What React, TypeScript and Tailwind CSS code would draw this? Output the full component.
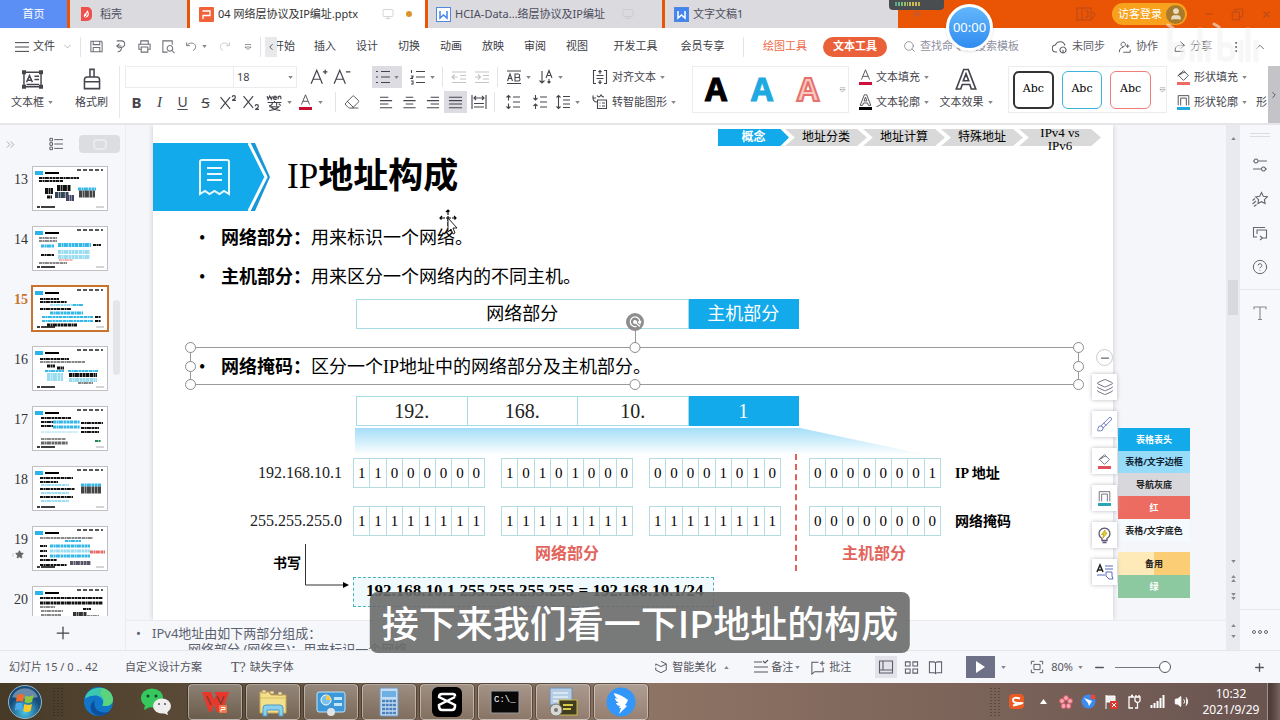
import React from "react";
import {
  Plus,
  Minus,
  Layers,
  Search,
  Star,
  HelpCircle,
  ChevronsRight,
  ChevronDown,
  ChevronUp,
  ChevronLeft,
  ChevronRight,
  MoreVertical,
  Volume2,
  Eraser,
  Brush,
  User,
  Monitor,
} from "lucide-react";

const UI_FONT = "font-['Noto_Sans','Noto_Sans_CJK_SC',sans-serif]";
const SLIDE_FONT = "font-['Liberation_Serif','Noto_Sans_CJK_SC',serif]";

/* ---------- small helpers ---------- */

interface IcoProps {
  d: string;
  size?: number;
  className?: string;
  fill?: string;
}

const Ico: React.FC<IcoProps> = ({ d, size = 16, className = "", fill = "none" }) => (
  <svg
    width={size}
    height={size}
    viewBox="0 0 16 16"
    fill={fill}
    stroke="currentColor"
    strokeWidth="1.1"
    className={`shrink-0 ${className}`}
  >
    <path d={d} />
  </svg>
);

const Caret: React.FC<{ up?: boolean }> = ({ up }) => (
  <svg width="5" height="3" viewBox="0 0 6 4" className="shrink-0 text-[#85858c]">
    <path d={up ? "M0 4h6L3 0z" : "M0 0h6L3 4z"} fill="currentColor" />
  </svg>
);

const icons = {
  save: "M2 2.500h11l1 1v10H2zM4.500 2.500v3.500h7v-3.500M4.500 13.500V9h7v4.500",
  pdf: "M4 2h5a3.500 3.500 0 0 1 0 7H7M7 5L4 7.500 7 10M4 7.500h5M9 9c0 3-1.500 4.500-4 4.500",
  print: "M4 5V2h8v3M4 11H2V5.500h12V11h-2M4.500 8.500h7V14h-7z",
  preview: "M7 14H2V2h10v4M9.500 7a3 3 0 1 0 .01 0zM11.500 12l3 3",
  undo: "M2 3v4h4M2.500 6.500C5 3.500 9 3 11.500 5s2 6-1.500 8",
  redo: "M14 3v4h-4M13.500 6.500C11 3.500 7 3 4.500 5s-2 6 1.500 8",
  more: "M3 4h10M3 8h10l-5 4z",
  textbox: "M1.500 2.500h13v11h-13zM.5 1.500h2v2h-2zM13.500 1.500h2v2h-2zM.5 12.500h2v2h-2zM13.500 12.500h2v2h-2zM3.500 10L5.700 5l2.200 5M4.300 8.500h2.800M9.500 5.500h3.500M9.500 8h3.500M3.500 11.800H13",
  brush: "M6.500 1h3v5.500h-3zM2.500 10V8.500q0-2 2-2h7q2 0 2 2V10zM2.500 10h11v5h-11z",
  bullets: "M1 2.500h2M1 8h2M1 13.500h2M6 2.500h9M6 8h9M6 13.500h9",
  numbers: "M1.500 1v3M1 7h2v1l-2 1.500h2M1 12h2v3H1M6 2.500h9M6 8h9M6 13.500h9",
  outdent: "M1 3h14M9 6.500h6M9 10h6M1 13.500h14M6.500 8H1M3.500 5.500L1 8l2.500 2.500",
  indent: "M1 3h14M9 6.500h6M9 10h6M1 13.500h14M1 8h5.500M4 5.500L6.500 8 4 10.500",
  charWidth: "M1 2h14M1 14.500h14M1.500 12L4 5l2.500 7M2.500 9.500h3M9 5v7h3.500q1.500 0 1.500-1.800t-2-1.700q1.700 0 1.700-1.700T12.200 5zM9 8.500h3",
  sort: "M4 2v12M1.500 11.500L4 14l2.500-2.500M8 9l3-7.500L14 9M9 6.500h4M11 10v4M9.500 12.500L11 14l1.500-1.500",
  left: "M1 2.500h9M1 6h13M1 9.500h9M1 13.500h13",
  center: "M4 2.500h8M1.500 6h13M4 9.500h8M1.500 13.500h13",
  right: "M6 2.500h9M2 6h13M6 9.500h9M2 13.500h13",
  justify: "M1 2.500h14M1 6h14M1 9.500h14M1 13.500h14",
  distribute: "M1 1v14M15 1v14M3 4h10M5 2L3 4l2 2M11 2l2 2-2 2M3 9.500h10M3 13h10",
  spacing: "M3.500 1.500v5M1.500 3.500l2-2 2 2M3.500 9.500v5M1.500 12.500l2 2 2-2M8 3h7M8 8h7M8 13h7",
  spacingIn: "M3.500 1v5M1.500 4l2 2 2-2M3.500 10v5M1.500 12l2-2 2 2M8 3h7M8 8h7M8 13h7",
  lineheight: "M3.500 1.500v13M1.500 3.500l2-2 2 2M1.500 12.500l2 2 2-2M8 2.500h7M8 6h7M8 10h7M8 13.500h7",
  alignText: "M4 1.500H1.500v13H4M12 1.500h2.500v13H12M4.500 6.500h7M4.500 9.500h7M8 5V1.500M6.500 3L8 1.500 9.500 3M8 11v3.500M6.500 13L8 14.500 9.500 13",
  smart: "M5 8C2 8 1 6 1 3.500M1 1.500l0 2.500h3M5 1.500q2 3 4-.5 1 2 3 2M5.500 6h9v8.500h-9zM7.500 9h1M10 9h3M7.500 12h1M10 12h3",
  letterA: "M3 13L8 1l5 12M5 9h6",
  letterAOutline: "M1.500 14L6.500 1h3l5 13h-3l-1-3h-5l-1 3zM6.200 8.500h3.600L8 3.800z",
  phonetic: "M1 2l1 3 1.500-3L5 5l1-3M7 3.500h3q-.5-1.500-1.500-1.500T7 3.500 8.500 5H10M11.500 5V2M11.500 3q2-2 2.500 0v2M8 6.500v1.500M1.500 8h13M6 8q0 3-3 3M10 8v3M12 9l2 2M3 12h9q-3 3-9 3.500M4.500 12q3 3 9 3.500",
  cloud: "M5 13H4a3.500 3.500 0 0 1-.5-7A5 5 0 0 1 13 6.500M11 8a3 3 0 1 0 .01 0M11 11v3",
  people: "M6 2.500a2.500 2.500 0 1 0 .01 0M1.500 14c0-4 2-5.500 4.500-5.500M11 5v4M9 7h4M6 14h8M14 11v3",
  share: "M9 2l5 4.500-5 4M14 6.500H9c-5 0-6.500 3-6.500 7.500H13",
  bucket: "M8 2l6 6-6 6-6-6zM4 7.500c2-3 5-4 6.500-3M1 9q2-4 5-4.500",
  outline: "M1.500 14V2h13v12M4.500 14V5h7v9",
  cube: "M8 1.500l6 3v7l-6 3-6-3v-3M2 4.500l6 3 6-3M2 4.500v2",
  notes: "M1 3h8M1 8h14M1 13h14M10 2l2 2 3-3",
  comment: "M9 2.500H2V15l3-2.500h9V8M13 1v5M10.500 3.500h5",
  normal: "M1.500 2h13v12h-13zM5 2v9M1.500 11h13",
  grid: "M1.500 2h5v4.500h-5zM9.500 2h5v4.500h-5zM1.500 9.500h5V14h-5zM9.500 9.500h5V14h-5z",
  book: "M8 3v11.500M8 3L6.500 2h-5v11.500h5L8 14.500l1.500-1h5V2h-5z",
  fit: "M1.500 5V1.500H5M11 1.500h3.500V5M14.500 11v3.500H11M5 14.500H1.500V11M4.500 5h7v6h-7z",
  sliders: "M1 4h1M6 4h9M4 2a2 2 0 1 0 .01 0M1 12h8M13.500 12H15M11.500 10a2 2 0 1 0 .01 0",
  starMotion: "M9.500 1.500l1.800 3.700 4 .6-2.900 2.800.7 4-3.600-1.900-3.600 1.900.7-4L3.700 5.800l4-.6zM.5 9.500L3 7.500M.5 13L4 10M2 15.500l2.500-2",
  windows: "M5 12H1.500V2.500H13M4.500 5h10v8h-4M5 9V5M8 11l2.500 2L8 15",
  outlineList: "M1 1.500h3v3H1zM1 6.500h3v3H1zM1 11.500h3v3H1zM6 3h10M6 8h10M6 13h10",
  gallery: "M2 4h12M2 8h12l-6 6z",
};

/* ---------- title tabs ---------- */

const PptBadge = () => (
  <svg width="15" height="15" viewBox="0 0 15 15" className="shrink-0">
    <rect width="15" height="15" rx="1" fill="#f0623a" />
    <path d="M3.500 4h7.500v4.500H4v3.500" fill="none" stroke="#fff" strokeWidth="1.300" />
  </svg>
);

const WordBadge: React.FC<{ solid?: boolean }> = ({ solid }) => (
  <svg width="15" height="15" viewBox="0 0 15 15" className="shrink-0">
    <rect x=".5" y=".5" width="14" height="14" fill={solid ? "#4285f0" : "#fff"} stroke="#4f88dc" />
    <path d="M4 4v7l3.500-3 3.500 3V4" fill="none" stroke={solid ? "#fff" : "#4285f0"} strokeWidth="1.500" />
  </svg>
);

const TitleBar = () => (
  <header className="relative flex h-7 shrink-0 gap-[3px] bg-[#e95504] text-[11px] text-[#4c4c5c]">
    <button className="w-[67px] bg-[#5c8ff5] text-white">首页</button>
    <button className="flex w-[117px] items-center gap-2 bg-[#dadadf] pl-[11px]">
      <svg width="11" height="14" viewBox="0 0 11 14">
        <path d="M0 0h7q4 1 4 5.500V9q0 5-6 5H0z" fill="#f0504c" />
        <path d="M3 10c-1-4 3-3 3-7 4 4 1 9-3 7z" fill="#fff" />
        <path d="M4 10q2-1 2.500-4" stroke="#f0504c" fill="none" />
      </svg>
      稻壳
    </button>
    <button className="flex w-[235px] items-center bg-white pl-[9px] text-[#333]">
      <PptBadge />
      <span className="ml-1 flex-1 whitespace-nowrap text-left">04 网络层协议及IP编址.pptx</span>
      <Monitor size={12} className="text-[#c8c8cc]" strokeWidth={1.5} />
      <span className="ml-3 mr-[13px] size-[6px] rounded-full bg-[#dc9428]" />
    </button>
    <button className="flex w-[234px] items-center bg-[#dadadf] pl-[8px]">
      <WordBadge />
      <span className="ml-1 flex-1 whitespace-nowrap text-left">HCIA-Data...络层协议及IP编址</span>
      <Monitor size={12} className="mr-7 text-[#c8c8cc]" strokeWidth={1.5} />
    </button>
    <button className="flex w-[233px] items-center gap-1 bg-[#dadadf] pl-[9px]">
      <WordBadge solid />
      文字文稿1
    </button>
    <button aria-label="新建标签" className="w-8 text-[#a9614c]">
      <Plus size={12} className="mx-auto" />
    </button>

    <div className="ml-auto flex items-center text-[#b8491a]">
      <svg width="20" height="14" viewBox="0 0 20 14" fill="none" stroke="currentColor">
        <rect x="1" y="1" width="14" height="12" />
        <path d="M6 1v12M9 4h3v6H9M16 5l3 2-3 5" />
      </svg>
      <button className="ml-4 flex h-[22px] w-[75px] items-center justify-between rounded-full bg-[#f7a11c] pl-[6px] pr-[2px] text-white">
        访客登录
        <span className="flex size-[19px] items-center justify-center rounded-full bg-[#a87a2c]">
          <User size={14} fill="#e8dcc0" stroke="#e8dcc0" />
        </span>
      </button>
      <button aria-label="最小化" className="ml-4">
        <Minus size={12} />
      </button>
      <button aria-label="还原" className="ml-4">
        <Ico size={13} d="M1.500 5h9v9.500h-9zM5 5V1.500h9.500V11h-4" />
      </button>
      <button aria-label="关闭" className="ml-4 mr-[7px]">
        <Plus size={13} className="rotate-45" />
      </button>
    </div>

    {/* recorder level meter, docked to the top edge */}
    <div className="absolute left-[889px] top-0 h-[10px] w-[55px] rounded-b bg-[#4a4d50] px-[6px] pt-[2px]">
      <div className="flex h-1 w-[25px] gap-px">
        {["#5a9", "#6b8", "#7b7", "#9b6", "#ab6", "#bb5", "#cb5", "#cb5", "#ca5"].map((c, i) => (
          <span key={i} className="flex-1" style={{ background: c }} />
        ))}
      </div>
    </div>
    <div className="absolute left-[946px] top-1 z-10 flex size-[47px] items-center justify-center rounded-full border-[3px] border-white bg-gradient-to-b from-[#62b6fa] to-[#2f8cf0] text-[13px] text-white shadow">
      00:00
    </div>
  </header>
);

/* ---------- menu ---------- */

const VSep = () => <span className="h-5 w-px shrink-0 bg-[#e4e4e8]" />;

const menuTabs = ["插入", "设计", "切换", "动画", "放映", "审阅", "视图"];

const MenuBar = () => (
  <nav className="relative flex h-[37px] shrink-0 items-center bg-white text-[11px] text-[#3c3c44]">
    <button className="flex w-20 items-center pl-[15px]">
      <Ico size={14} d="M0 3h16M0 8h16M0 13h16" />
      <span className="ml-1">文件</span>
      <ChevronDown size={11} className="ml-[7px] text-[#999]" strokeWidth={1.5} />
    </button>
    <VSep />
    <div className="flex w-[179px] items-center pl-1 text-[#6c6c74]">
      {["save", "pdf", "print", "preview"].map((n) => (
        <button key={n} aria-label={n} className="flex w-6 justify-center">
          <Ico size={15} d={icons[n as keyof typeof icons]} />
        </button>
      ))}
      <button aria-label="撤销" className="flex w-8 items-center justify-center gap-1">
        <Ico size={13} d={icons.undo} />
        <Caret />
      </button>
      <button aria-label="重做" className="flex w-6 justify-center text-[#c4c4c8]">
        <Ico size={13} d={icons.redo} />
      </button>
      <button aria-label="更多" className="flex w-6 justify-center">
        <Ico size={10} d={icons.more} />
      </button>
    </div>
    <VSep />
    <button aria-label="向左" className="ml-1 flex h-5 w-3 items-center justify-center bg-[#e9e9ec]">
      <ChevronLeft size={10} />
    </button>
    <button className="flex w-[18px] justify-end overflow-hidden whitespace-nowrap">开始</button>
    <div className="ml-[9px] flex">
      {menuTabs.map((t) => (
        <button key={t} className="w-[42px]">
          {t}
        </button>
      ))}
    </div>
    <button className="ml-1 w-[67px]">开发工具</button>
    <button className="w-[67px]">会员专享</button>
    <span className="ml-[7px] flex">
      <VSep />
    </span>
    <button className="ml-[11px] w-[60px] text-[#ee6a45]">绘图工具</button>
    <button className="ml-2 h-5 w-16 rounded-full bg-[#ea6038] font-bold text-white">文本工具</button>
    <label className="ml-4 flex items-center gap-1">
      <Search size={13} strokeWidth={1.5} className="text-[#888]" />
      <input
        aria-label="搜索"
        placeholder="查找命令、搜索模板"
        className="w-28 bg-transparent outline-none placeholder:text-[#9090a0]"
      />
    </label>
    <div className="ml-auto flex items-center pr-[13px] text-[#5c5c64]">
      <button className="flex w-[63px] items-center gap-1">
        <Ico d={icons.cloud} />
        未同步
      </button>
      <button className="flex w-[58px] items-center gap-1 pl-[3px]">
        <Ico size={14} d={icons.people} />
        协作
      </button>
      <button className="flex w-[56px] items-center gap-1">
        <Ico size={13} d={icons.share} />
        分享
      </button>
      <MoreVertical size={14} strokeWidth={1.5} />
      <ChevronUp size={14} strokeWidth={1.5} className="ml-[10px]" />
    </div>

    {/* channel watermark */}
    <svg width="98" height="46" viewBox="0 0 98 46" className="absolute right-[18px] top-[-6px] opacity-60">
      <g fill="none" stroke="#f2f2f2" strokeWidth="5" strokeLinecap="round">
        <path d="M6 8v28q14 4 13-6t-13-6M28 20v18M36 8v30M44 20v18M56 8v28q14 4 13-6t-13-6M77 20v18M84 8v30M92 20v18" />
        <path d="M4 3l5 3M50 2l5 3" strokeWidth="3" />
      </g>
    </svg>
  </nav>
);

/* ---------- ribbon ---------- */

const RBtn: React.FC<{ label: string; active?: boolean; children: React.ReactNode }> = ({
  label,
  active,
  children,
}) => (
  <button
    aria-label={label}
    className={`flex h-[22px] w-[23px] shrink-0 items-center justify-center ${active ? "bg-[#dcdce2]" : ""}`}
  >
    {children}
  </button>
);

const IconLabel: React.FC<{ icon: React.ReactNode; text: string }> = ({ icon, text }) => (
  <button className="flex h-[22px] items-center gap-1 whitespace-nowrap">
    {icon}
    <span>{text}</span>
    <Caret />
  </button>
);

const Underlined: React.FC<{ bar: string; d: string }> = ({ bar, d }) => (
  <span className="flex flex-col items-center">
    <Ico size={13} d={d} />
    <span className={`h-[3px] w-[13px] ${bar}`} />
  </span>
);

const WordArtA: React.FC<{ fill: string; stroke: string; size?: number; w?: number }> = ({
  fill,
  stroke,
  size = 32,
  w = 1,
}) => (
  <svg width={size} height={size} viewBox="0 0 32 32">
    <text
      x="16"
      y="27"
      textAnchor="middle"
      className="font-['Open_Sans',sans-serif] text-[32px] font-bold"
      fill={fill}
      stroke={stroke}
      strokeWidth={w}
    >
      A
    </text>
  </svg>
);

const Ribbon = () => (
  <section className="flex h-[60px] shrink-0 items-start overflow-hidden border-b-2 border-[#e6e6e8] bg-white pt-px text-[11px] text-[#44444c]">
    <button className="flex w-16 flex-col items-center pt-[3px]">
      <Ico size={21} d={icons.textbox} />
      <span className="mt-1 flex items-center gap-1">
        文本框 <Caret />
      </span>
    </button>
    <button className="flex w-[55px] flex-col items-center pt-[2px]">
      <Ico size={22} d={icons.brush} />
      <span className="mt-1">格式刷</span>
    </button>
    <span className="h-[52px] w-px bg-[#e8e8ea]" />

    {/* font */}
    <div className="flex w-[242px] flex-col gap-[3px] pl-[5px]">
      <div className="flex h-[22px] items-center">
        <select aria-label="字体" className="h-[22px] w-[109px] appearance-none border border-[#ececef] bg-white" />
        <label className="relative flex h-[22px] w-[63px] items-center justify-between border border-l-0 border-[#ececef] pr-[3px]">
          <select aria-label="字号" className="w-full appearance-none bg-transparent pl-[3px] text-[11px] outline-none">
            <option>18</option>
          </select>
          <Caret />
        </label>
        <button aria-label="增大字号" className="ml-[10px] flex w-[23px] justify-center">
          <Ico size={18} d="M1 14L6 2l5 12M3 10h6M11.500 3.500h4M13.500 1.500v4" />
        </button>
        <button aria-label="减小字号" className="flex w-[23px] justify-center">
          <Ico size={18} d="M1 14L6 2l5 12M3 10h6M11.500 3.500h4" />
        </button>
      </div>
      <div className="flex h-[22px] items-center text-[15px] leading-5">
        <RBtn label="加粗">
          <b>B</b>
        </RBtn>
        <RBtn label="倾斜">
          <i className="font-['Liberation_Serif',serif]">I</i>
        </RBtn>
        <RBtn label="下划线">
          <span className="text-[14px] underline underline-offset-2">U</span>
        </RBtn>
        <RBtn label="删除线">
          <s>S</s>
        </RBtn>
        <RBtn label="上标">
          <Ico size={17} d="M.5 3l9 11M9.500 3l-9 11M11.500 3q0-1.500 1.500-1.500t1.500 1.500-3 3h3.500" />
        </RBtn>
        <RBtn label="下标">
          <Ico size={17} d="M.5 2l9 11M9.500 2l-9 11M11.500 11.500q0-1.500 1.500-1.500t1.500 1.500-3 3h3.500" />
        </RBtn>
        <button aria-label="拼音指南" className="flex w-8 items-center justify-center gap-1">
          <Ico size={17} d={icons.phonetic} />
          <Caret />
        </button>
        <button aria-label="字体颜色" className="flex w-8 items-center justify-center gap-[6px]">
          <Underlined bar="bg-[#c8102e]" d={icons.letterA} />
          <Caret />
        </button>
        <span className="mx-2 h-5 w-px bg-[#e4e4e8]" />
        <Eraser size={16} strokeWidth={1.3} />
      </div>
    </div>

    {/* paragraph */}
    <div className="flex w-[222px] flex-col gap-[3px] pl-[10px]">
      <div className="flex h-[22px] items-center">
        <button aria-label="项目符号" className="flex h-[22px] w-[30px] items-center justify-center gap-[3px] bg-[#dcdce2]">
          <Ico d={icons.bullets} />
          <Caret />
        </button>
        <button aria-label="编号" className="ml-1 flex w-8 items-center justify-center gap-1">
          <Ico d={icons.numbers} />
          <Caret />
        </button>
        <span className="mx-1 h-5 w-px bg-[#e4e4e8]" />
        <span className="flex text-[#c4c4c8]">
          <RBtn label="减少缩进">
            <Ico d={icons.outdent} />
          </RBtn>
          <RBtn label="增加缩进">
            <Ico d={icons.indent} />
          </RBtn>
        </span>
        <span className="mx-1 h-5 w-px bg-[#e4e4e8]" />
        <button aria-label="字符宽度" className="flex w-8 items-center justify-center gap-1">
          <Ico d={icons.charWidth} />
          <Caret />
        </button>
        <button aria-label="文字方向" className="flex w-8 items-center justify-center gap-1">
          <Ico d={icons.sort} />
          <Caret />
        </button>
      </div>
      <div className="flex h-[22px] items-center pl-[3px]">
        {(["left", "center", "right"] as const).map((n) => (
          <RBtn key={n} label={n}>
            <Ico size={15} d={icons[n]} />
          </RBtn>
        ))}
        <RBtn label="justify" active>
          <Ico size={15} d={icons.justify} />
        </RBtn>
        <RBtn label="distribute">
          <Ico d={icons.distribute} />
        </RBtn>
        <span className="ml-1 mr-[6px] h-5 w-px bg-[#e4e4e8]" />
        <RBtn label="增大段落间距">
          <Ico d={icons.spacing} />
        </RBtn>
        <span className="w-1" />
        <RBtn label="减小段落间距">
          <Ico d={icons.spacingIn} />
        </RBtn>
        <button aria-label="行距" className="flex w-8 items-center justify-center gap-1">
          <Ico d={icons.lineheight} />
          <Caret />
        </button>
      </div>
    </div>
    <div className="flex w-[108px] flex-col gap-[3px] pl-2">
      <IconLabel icon={<Ico d={icons.alignText} />} text="对齐文本" />
      <IconLabel icon={<Ico d={icons.smart} />} text="转智能图形" />
    </div>

    {/* word art presets */}
    <div className="flex h-[47px] w-[157px] shrink-0 items-center border border-[#ececef]">
      <button aria-label="黑色" className="flex w-[46px] justify-center">
        <WordArtA fill="#000" stroke="#000" />
      </button>
      <button aria-label="蓝色" className="flex w-[46px] justify-center">
        <WordArtA fill="#1fa9e0" stroke="#1fa9e0" />
      </button>
      <button aria-label="红色" className="flex w-[46px] justify-center">
        <WordArtA fill="#f9c9c4" stroke="#e6706a" w={2} />
      </button>
      <span className="ml-auto pr-[2px]">
        <Ico size={7} className="text-[#777]" d={icons.gallery} />
      </span>
    </div>
    <div className="flex w-[90px] shrink-0 flex-col gap-[3px] pl-[10px]">
      <IconLabel icon={<Underlined bar="bg-[#d0103a]" d={icons.letterA} />} text="文本填充" />
      <IconLabel icon={<Underlined bar="bg-black" d={icons.letterAOutline} />} text="文本轮廓" />
    </div>
    <button className="flex w-[54px] shrink-0 flex-col items-center pt-[2px]">
      <Ico size={24} d={icons.letterAOutline} />
      <span className="mt-[2px] flex items-center gap-1 whitespace-nowrap">
        文本效果 <Caret />
      </span>
    </button>

    {/* shape presets */}
    <div className="ml-[15px] flex h-[47px] w-[159px] shrink-0 items-center gap-2 border border-[#ececef] pl-1 font-['DejaVu_Serif',serif] text-[11px] text-black">
      <button className="h-[38px] w-[41px] rounded-md border-2 border-[#333]">Abc</button>
      <button className="h-[38px] w-[41px] rounded-md border border-[#3cb4dc]">Abc</button>
      <button className="h-[38px] w-[41px] rounded-md border border-[#ee7d78]">Abc</button>
      <Ico size={7} className="text-[#777]" d={icons.gallery} />
    </div>
    <div className="flex w-[89px] shrink-0 flex-col gap-[3px] pl-[10px]">
      <IconLabel icon={<Underlined bar="bg-[#ee6a65]" d={icons.bucket} />} text="形状填充" />
      <IconLabel icon={<Underlined bar="bg-[#1fa9e0]" d={icons.outline} />} text="形状轮廓" />
    </div>
    <span className="mt-7 flex-1 overflow-hidden whitespace-nowrap">形</span>
    <button aria-label="向右" className="flex h-full w-3 shrink-0 items-center justify-center bg-[#c4c4c8]">
      <ChevronRight size={10} />
    </button>
  </section>
);

/* ---------- thumbnails ---------- */

// x1, x2, y, thickness, colour
type Stroke = [number, number, number, number, string];

const K = "#111";
const C = "#9adcf0";
const B = "#35b8e8";
const R = "#e86a6a";

const thumbs: { no: number; marks: Stroke[] }[] = [
  {
    no: 13,
    marks: [
      [6, 46, 11, 2, K], [6, 30, 14, 2, K], [12, 20, 24, 6, K], [14, 19, 30, 3, K], [24, 38, 21, 6, K],
      [22, 36, 28, 6, "#345"], [33, 41, 31, 6, "#446"], [45, 63, 22, 3, B], [46, 62, 27, 7, "#444"],
    ],
  },
  {
    no: 14,
    marks: [
      [6, 24, 11, 1, K], [6, 24, 14, 1, K], [8, 21, 19, 3, B], [25, 58, 18, 4, B], [60, 68, 18, 2, K],
      [25, 57, 25, 4, C], [8, 21, 28, 2, K], [25, 57, 30, 4, C], [26, 40, 33, 1, R], [6, 34, 36, 1, K],
    ],
  },
  {
    no: 15,
    marks: [
      [7, 26, 12, 2, K], [7, 34, 15, 2, K], [17, 40, 18, 2, C], [40, 50, 18, 2, B], [7, 38, 22, 2, K],
      [17, 50, 26, 3, B], [9, 60, 30, 2, B], [62, 68, 30, 2, K], [9, 60, 34, 2, B], [62, 68, 34, 2, K], [14, 44, 38, 3, K],
    ],
  },
  {
    no: 16,
    marks: [
      [7, 36, 12, 2, K], [7, 52, 15, 1, K], [14, 22, 19, 3, K], [24, 31, 21, 3, K], [12, 31, 24, 2, B],
      [35, 65, 24, 2, B], [14, 30, 30, 8, C], [36, 64, 28, 4, K], [36, 64, 33, 4, C], [45, 60, 36, 1, K],
    ],
  },
  {
    no: 17,
    marks: [
      [8, 38, 11, 2, K], [20, 47, 15, 3, B], [8, 20, 15, 2, K], [20, 47, 20, 3, B], [8, 20, 19, 2, K],
      [48, 70, 16, 2, K], [48, 66, 21, 2, K], [48, 66, 25, 2, K], [8, 45, 25, 1, C], [8, 33, 32, 1, K], [8, 35, 36, 3, "#666"], [62, 68, 34, 2, "#285"],
    ],
  },
  {
    no: 18,
    marks: [
      [7, 40, 11, 2, K], [7, 25, 15, 2, K], [8, 36, 18, 2, C], [7, 42, 22, 2, K], [8, 36, 26, 2, C],
      [7, 40, 30, 2, K], [8, 36, 34, 2, C], [48, 68, 18, 3, B], [48, 68, 23, 7, "#444"],
    ],
  },
  {
    no: 19,
    marks: [
      [7, 60, 11, 1, K], [32, 48, 14, 2, B], [7, 14, 19, 2, K], [17, 57, 19, 3, B], [7, 14, 24, 2, K],
      [17, 57, 24, 3, C], [57, 72, 25, 3, R], [17, 57, 29, 3, B], [7, 14, 29, 2, K], [7, 24, 33, 2, K], [37, 58, 36, 4, "#556"], [7, 34, 38, 2, K],
    ],
  },
  {
    no: 20,
    marks: [
      [7, 70, 11, 2, K], [7, 70, 16, 3, K], [7, 22, 20, 1, K], [8, 30, 24, 1, K], [8, 28, 28, 1, K],
      [50, 58, 22, 2, K], [40, 54, 27, 4, "#333"], [54, 66, 29, 1, K],
    ],
  },
];

const Thumb: React.FC<{ marks: Stroke[] }> = ({ marks }) => (
  <svg viewBox="0 0 74 43" className="block h-[43px] w-full bg-white">
    <rect x="2" y="4" width="8" height="4" fill="#2bb3ea" />
    <g fill="none">
      <path d="M12 6h14" stroke="#000" strokeWidth="2" />
      <path d="M44 3h26" stroke="#222" strokeWidth="1.500" strokeDasharray="4 2" />
      <path d="M4 40h19" stroke="#000" strokeWidth="1.500" strokeDasharray="3 1 14 1" />
      <path d="M63 40h8" stroke="#aaa" />
      {marks.map(([x1, x2, y, w, c], i) => (
        <path key={i} d={`M${x1} ${y}H${x2}`} stroke={c} strokeWidth={w} strokeDasharray="3 .5 2 .4 4 .6" />
      ))}
    </g>
  </svg>
);

const SlideList = () => (
  <aside className="flex w-[126px] shrink-0 flex-col border-r border-[#ececf0] bg-[#f6f7fa]">
    <div className="flex h-[38px] shrink-0 items-center pl-1 text-[#5c5c64]">
      <ChevronsRight size={13} strokeWidth={1.5} className="text-[#999]" />
      <button aria-label="大纲" className="ml-8">
        <Ico size={14} d={icons.outlineList} />
      </button>
      <button aria-label="幻灯片" className="ml-4 flex h-[18px] w-[41px] items-center justify-center rounded-sm bg-[#dbdde1]">
        <span className="h-[11px] w-[14px] rounded-sm border-2 border-[#e8eaee]" />
      </button>
    </div>
    <div className="flex min-h-0 flex-1 overflow-hidden">
      <ol className={`flex flex-1 flex-col gap-[15px] pt-[3px] ${SLIDE_FONT}`}>
        {thumbs.map((t) => (
          <li key={t.no} className="flex h-[45px] shrink-0 gap-1">
            <div
              className={`flex w-7 flex-col items-end pt-1 text-[14px] leading-5 ${
                t.no === 15 ? "font-bold text-[#c8742e]" : "text-[#333]"
              }`}
            >
              {t.no}
              {t.no === 19 && (
                <span className="flex items-center pr-1 text-[#666]">
                  <Ico size={4} d="M8 0v16" />
                  <Star size={9} fill="#666" />
                </span>
              )}
            </div>
            <div className={`w-19 border ${t.no === 15 ? "border-[#c8742e] outline outline-[#c8742e]" : "border-[#c0c0c4]"}`}>
              <Thumb marks={t.marks} />
            </div>
          </li>
        ))}
      </ol>
      <span className="mr-[5px] mt-[137px] h-[75px] w-[7px] rounded bg-[#e4e5e9]" />
    </div>
    <button aria-label="新建幻灯片" className="flex h-[34px] shrink-0 items-center justify-center text-[#444]">
      <Plus size={20} strokeWidth={1.5} />
    </button>
  </aside>
);

/* ---------- slide ---------- */

const crumbs = ["地址分类", "地址计算", "特殊地址"];

const CRUMB_SHAPE = "[clip-path:polygon(0_0,88%_0,100%_50%,88%_100%,0_100%,12%_50%)]";

const Crumbs = () => (
  <div className="flex h-[18px] justify-end pr-3 pt-1 text-[12px] leading-[17px] text-black">
    <span className="h-[17px] w-[71px] bg-[#12aaeb] text-center font-bold text-white [clip-path:polygon(0_0,88%_0,100%_50%,88%_100%,0_100%)]">
      概念
    </span>
    {crumbs.map((c) => (
      <span key={c} className={`-ml-1 h-[17px] w-[82px] bg-[#d9d9d9] text-center ${CRUMB_SHAPE}`}>
        {c}
      </span>
    ))}
    <span className="relative -ml-1 flex h-[17px] w-[82px] items-center justify-center">
      <span className={`absolute inset-0 bg-[#d9d9d9] ${CRUMB_SHAPE}`} />
      <span className="relative mt-[2px] w-12 text-center text-[13px] leading-[13px]">IPv4 vs IPv6</span>
    </span>
  </div>
);

const Bullet: React.FC<{ term: string; children: React.ReactNode }> = ({ term, children }) => (
  <div className="flex h-[27px] items-center text-[18px] leading-[27px] text-black">
    <span className="w-[22px]">•</span>
    <b>{term}：</b>
    <span className="whitespace-nowrap">{children}</span>
  </div>
);

const Octet: React.FC<{ bits: string }> = ({ bits }) => (
  <table className="h-[30px] w-[132px] shrink-0 table-fixed border-collapse text-center text-[15px] leading-5 text-black">
    <tbody>
      <tr>
        {bits.split("").map((b, i) => (
          <td key={i} className="border border-[#b5dce0] p-0">
            {b}
          </td>
        ))}
      </tr>
    </tbody>
  </table>
);

const BitRow: React.FC<{ label: string; octets: string[]; name: string }> = ({ label, octets, name }) => (
  <div className="flex items-center">
    <span className="w-[189px] shrink-0 text-right text-[16px] text-[#222]">{label}</span>
    <div className="ml-[11px] flex gap-4">
      {octets.slice(0, 3).map((o, i) => (
        <Octet key={i} bits={o} />
      ))}
    </div>
    <span className="w-7 shrink-0" />
    <Octet bits={octets[3]} />
    <b className="ml-[14px] whitespace-nowrap text-[14px] text-black">{name}</b>
  </div>
);

const Handle: React.FC<{ className: string }> = ({ className }) => (
  <span className={`absolute size-[11px] rounded-full border border-[#8c8c8c] bg-white ${className}`} />
);

const Slide = () => (
  <div className={`relative min-w-0 flex-1 bg-white shadow-[0_0_5px_#c8c8cc] ${SLIDE_FONT}`}>
    <Crumbs />
    <div className="flex h-[68px] items-center">
      <svg width="118" height="68" viewBox="0 0 118 68" className="shrink-0">
        <path d="M0 0h95l19 34-19 34H0z" fill="#12aaeb" />
        <path d="M97 0h5l15 34-15 34h-5l15-34z" fill="#1797d8" />
        <path d="M96 0l17 34-17 34" fill="none" stroke="#fff" strokeWidth="3" />
        <path
          d="M47 19q0-2 2-2h25q2 0 2 2v32l-5-3-4.500 3-5-3-5 3-4.500-3-5 3zM54 25h15M54 31h15M54 37h15"
          fill="none"
          stroke="#e8faff"
          strokeWidth="2"
        />
      </svg>
      <h1 className="ml-4 text-[35px] leading-[52px] text-black">
        IP<b>地址构成</b>
      </h1>
    </div>

    <div className="mt-[14px] flex flex-col gap-3 pl-[46px]">
      <Bullet term="网络部分">用来标识一个网络。</Bullet>
      <Bullet term="主机部分">用来区分一个网络内的不同主机。</Bullet>
    </div>

    <table className="ml-[203px] mt-2 h-[30px] w-[443px] table-fixed border-collapse text-center text-[18px] leading-6 text-black">
      <tbody>
        <tr>
          <td colSpan={3} className="border border-[#a8dce4] p-0">
            网络部分
          </td>
          <td className="border border-[#12aaeb] bg-[#12aaeb] p-0 text-white">主机部分</td>
        </tr>
      </tbody>
    </table>

    {/* selected text box */}
    <div className="relative ml-[37px] mr-[34px] mt-[18px] flex h-[38px] items-center border border-[#9a9a9a] pl-2 pt-[2px]">
      <Bullet term="网络掩码">区分一个IP地址中的网络部分及主机部分。</Bullet>
      <Handle className="-left-[6px] -top-[6px]" />
      <Handle className="-left-[6px] top-[13px]" />
      <Handle className="-bottom-[6px] -left-[6px]" />
      <Handle className="-right-[6px] -top-[6px]" />
      <Handle className="-right-[6px] top-[13px]" />
      <Handle className="-bottom-[6px] -right-[6px]" />
      <span className="absolute -top-5 left-1/2 h-5 w-px bg-[#9a9a9a]" />
      <Handle className="-top-[6px] left-1/2 -translate-x-1/2" />
      <Handle className="-bottom-[6px] left-1/2 -translate-x-1/2" />
      <svg width="18" height="18" viewBox="0 0 18 18" className="absolute -top-[35px] left-1/2 -translate-x-1/2">
        <circle cx="9" cy="9" r="9" fill="#8d8d8d" />
        <path d="M10.500 13.300A4.800 4.800 0 1 1 13.800 9.500M10 10l4 3.500M12 8.500l2 2 1-2.500" fill="none" stroke="#fff" strokeWidth="1.300" />
        <circle cx="9" cy="9" r="2" fill="#fff" />
      </svg>
    </div>

    <table className="ml-[203px] mt-[11px] h-[30px] w-[443px] table-fixed border-collapse text-center text-[20px] leading-6 text-[#222]">
      <tbody>
        <tr>
          {["192.", "168.", "10."].map((n) => (
            <td key={n} className="border border-[#a8dce4] p-0">
              {n}
            </td>
          ))}
          <td className="border border-[#12aaeb] bg-[#12aaeb] p-0 text-white">1</td>
        </tr>
      </tbody>
    </table>
    <svg width="586" height="32" viewBox="0 0 586 32" className="ml-[202px] block">
      <defs>
        <linearGradient id="fan" x1="0" y1="0" x2="0" y2="1">
          <stop offset="0" stopColor="#a4def7" />
          <stop offset=".9" stopColor="#fff" />
        </linearGradient>
      </defs>
      <path d="M0 2h445l141 30H0z" fill="url(#fan)" />
    </svg>

    <div className="relative flex flex-col gap-[18px]">
      <BitRow label="192.168.10.1" octets={["11000000", "10101000", "00001010", "00000001"]} name="IP 地址" />
      <BitRow label="255.255.255.0" octets={["11111111", "11111111", "11111111", "00000000"]} name="网络掩码" />
      <span className="absolute left-[642px] -top-1 h-[117px] border-l-2 border-dashed border-[#e0605a]" />
    </div>

    <div className="flex pt-[5px]">
      <div className="flex w-[199px] shrink-0 items-start justify-end pt-[2px] text-[14px] text-black">
        <b className="pt-[10px]">书写</b>
        <svg width="47" height="48" viewBox="0 0 47 48" className="ml-1">
          <path d="M.5 1v41H40" fill="none" stroke="#333" />
          <path d="M38 39l6 3-6 3z" fill="#000" />
        </svg>
      </div>
      <div className="pl-px">
        <div className="flex pt-px text-[16px] font-bold leading-6 text-[#e2645c]">
          <span className="w-[428px] text-center">网络部分</span>
          <span className="w-[186px] text-center">主机部分</span>
        </div>
        <div className="mt-[11px] h-[30px] w-[361px] border border-dashed border-[#4cb0c0] bg-[#f0f9fb] pl-[12px] text-[17px] font-bold leading-[26px] text-black">
          192.168.10.1 255.255.255.255 = 192.168.10.1/24
        </div>
      </div>
    </div>

    {/* mouse pointer */}
    <svg width="20" height="26" viewBox="0 0 20 26" className="absolute left-[286px] top-[84px]">
      <path d="M9 1v16M1 9h16M7 3l2-2 2 2M3 7L1 9l2 2M15 7l2 2-2 2" fill="none" stroke="#000" strokeWidth="1.200" strokeDasharray="5 1" />
      <path d="M9 9v14l3-3 2 5 2-1-2-5h4z" fill="#fff" stroke="#222" />
    </svg>

    <QuickTools />
  </div>
);

const QuickTools = () => {
  const box = "flex h-[26px] w-[25px] items-center justify-center bg-white shadow-[0_0_4px_#b8b8c4]";
  return (
    <div className="absolute -right-1 top-[224px] flex flex-col gap-[11px] text-[#686878]">
      <button aria-label="收起" className="mx-auto -mb-[3px] flex size-[17px] items-center justify-center rounded-full border border-[#ccc] bg-white">
        <Minus size={12} strokeWidth={2.5} />
      </button>
      <button aria-label="图层" className={box}>
        <Layers size={18} strokeWidth={1.2} />
      </button>
      <button aria-label="格式" className={box}>
        <Brush size={17} strokeWidth={1.2} color="#5a6ab8" />
      </button>
      <button aria-label="填充" className={box}>
        <Underlined bar="bg-[#e0505a]" d={icons.bucket} />
      </button>
      <button aria-label="轮廓" className={box}>
        <Underlined bar="bg-[#2aa5b8]" d={icons.outline} />
      </button>
      <button aria-label="灵感" className={box}>
        <svg width="17" height="17" viewBox="0 0 17 17" fill="none" stroke="#5c5470">
          <path d="M6 13.500v-2a5.500 5.500 0 1 1 5 0v2zM6.500 15.500h4" strokeWidth="1.300" />
          <path d="M9 3L5.500 7.500h2L7 11l4-5H9z" fill="#e8d820" stroke="#c8a820" />
        </svg>
      </button>
      <button aria-label="文字" className={box}>
        <svg width="18" height="18" viewBox="0 0 18 18" fill="none" stroke="#5a6ab8">
          <path d="M1 9l3-7 3 7M2 7h4" stroke="#222" strokeWidth="1.500" />
          <path d="M9 3h8M9 6h8M1 12h8M10 9h6v4l1 3h-4l-3-3z" />
        </svg>
      </button>
    </div>
  );
};

const palette: [string, string][] = [
  ["表格表头", "bg-[#12aaeb] text-white h-[23px]"],
  ["表格/文字边框", "bg-[#96dcf8] text-[#123] h-[22px]"],
  ["导航灰底", "bg-[#d8d8dc] text-[#222] h-[23px]"],
  ["红", "bg-[#ec6c62] text-white h-[23px]"],
  ["表格/文字底色", "bg-[#f4fafd] text-[#222] h-[23px] mb-[10px]"],
  ["备用", "bg-gradient-to-r from-[#fdeab8] from-50% to-[#fbcd74] to-50% text-[#222] h-[23px]"],
  ["绿", "bg-[#8cc8a0] text-white h-[23px]"],
];

const Pasteboard = () => (
  <div className="w-[113px] shrink-0 pl-[5px] pt-[303px]">
    {palette.map(([name, cls]) => (
      <div key={name} className={`flex w-[72px] items-center justify-center text-[9px] font-bold ${cls}`}>
        {name}
      </div>
    ))}
  </div>
);

/* ---------- side rails ---------- */

const ScrollRail = () => (
  <div className="flex w-[14px] shrink-0 flex-col items-center bg-[#e9eaef] py-3">
    <Caret up />
    <span className="mt-[140px] h-[35px] w-[10px] bg-[#d8d9de]" />
    <span className="flex-1" />
    <Caret />
    <span className="mt-3 flex flex-col gap-px">
      <Caret up />
      <Caret up />
    </span>
    <span className="mb-6 mt-[11px] flex flex-col gap-px">
      <Caret />
      <Caret />
    </span>
    <span className="flex flex-col gap-2">
      <Caret up />
      <Caret />
    </span>
  </div>
);

const SideRail = () => (
  <aside className="flex w-10 shrink-0 flex-col items-center bg-[#f7f8fb] text-[#66666e]">
    <span className="mt-2 h-1 w-5 border-y border-[#ddd]" />
    <button aria-label="属性" className="mt-5">
      <Ico d={icons.sliders} />
    </button>
    <button aria-label="动画" className="mt-[18px]">
      <Ico d={icons.starMotion} />
    </button>
    <button aria-label="切换窗格" className="mt-[18px]">
      <Ico d={icons.windows} />
    </button>
    <button aria-label="帮助" className="mt-[18px]">
      <HelpCircle size={16} strokeWidth={1.5} />
    </button>
    <span className="mt-[14px] h-px w-full bg-[#e6e6ea]" />
    <button aria-label="文本" className="mt-[15px]">
      <Ico d="M2 4.500V2h12v2.500M8 2v12.500M6 14.500h4" className="text-[#888]" />
    </button>
    <span className="flex-1" />
    <button aria-label="更多" className="flex h-[41px] w-full items-center justify-center gap-[2px] border-t border-[#e6e6ea] pt-1">
      {[0, 1, 2].map((i) => (
        <span key={i} className="size-1 rounded-full border border-[#66666e]" />
      ))}
    </button>
  </aside>
);

/* ---------- status bar ---------- */

const StatusBar = () => (
  <footer className="flex h-[33px] shrink-0 items-center border-t border-[#e6e6ea] bg-[#f6f7fa] text-[11px] text-[#55555f]">
    <span className="w-[116px] pl-[9px]">幻灯片 15 / 0 .. 42</span>
    <span className="pl-[9px]">自定义设计方案</span>
    <button className="ml-[29px] flex items-center gap-1">
      <span className="font-['Liberation_Serif',serif] text-[14px]">T?</span>
      缺失字体
    </button>
    <div className="ml-auto flex items-center">
      <button className="flex items-center gap-1">
        <Ico size={14} d={icons.cube} />
        智能美化
        <span className="ml-1">
          <Caret up />
        </span>
      </button>
      <button className="ml-6 flex items-center gap-[2px]">
        <Ico d={icons.notes} />
        备注
        <Caret />
      </button>
      <button className="ml-[10px] flex items-center gap-1">
        <Ico size={15} d={icons.comment} />
        批注
      </button>
      <div className="ml-6 flex text-[#5c5c6c]">
        <button aria-label="普通视图" className="flex h-[22px] w-[22px] items-center justify-center bg-[#e2e2e8]">
          <Ico d={icons.normal} />
        </button>
        <button aria-label="浏览视图" className="ml-[2px] flex w-6 items-center justify-center">
          <Ico size={15} d={icons.grid} />
        </button>
        <button aria-label="阅读视图" className="flex w-6 items-center justify-center">
          <Ico size={15} d={icons.book} />
        </button>
      </div>
      <button aria-label="放映" className="ml-[19px] flex h-[22px] w-[29px] items-center justify-center bg-[#6e7088]">
        <svg width="10" height="12" viewBox="0 0 10 12">
          <path d="M0 0l9 6-9 6z" fill="#fff" />
        </svg>
      </button>
      <span className="ml-[6px]">
        <Caret />
      </span>
      <Ico size={14} className="ml-6" d={icons.fit} />
      <span className="ml-[7px] mr-[5px]">80%</span>
      <Caret />
      <button aria-label="缩小" className="ml-[10px]">
        <Minus size={13} strokeWidth={2.5} />
      </button>
      <input
        type="range"
        aria-label="缩放"
        min={0}
        max={100}
        defaultValue={35}
        className="ml-[9px] h-3 w-[138px] appearance-none bg-[linear-gradient(#77777f,#77777f)] bg-[length:40%_1px] bg-[position:left_center] bg-no-repeat [&::-webkit-slider-thumb]:size-3 [&::-webkit-slider-thumb]:appearance-none [&::-webkit-slider-thumb]:rounded-full [&::-webkit-slider-thumb]:border [&::-webkit-slider-thumb]:border-[#55555f] [&::-webkit-slider-thumb]:bg-white"
      />
      <button aria-label="放大" className="mr-[14px]">
        <Plus size={13} strokeWidth={2.5} />
      </button>
    </div>
  </footer>
);

/* ---------- taskbar ---------- */

const Grip = () => (
  <svg width="10" height="28" viewBox="0 0 10 28" className="shrink-0 opacity-60">
    <path d="M1 0v28M5 0v28M9 0v28" stroke="#111" strokeDasharray="1 2" />
  </svg>
);

const apps: [string, React.ReactNode][] = [
  [
    "WPS",
    <>
      <path d="M2 5h9l3 8 2-5-2-3h15l-7 20h-5l-3-8-3 8H9z" fill="#e8382c" />
      <path d="M7 9l4 9M17 9l4 8 3-8" stroke="#7c3c34" strokeWidth="1.500" fill="none" />
      <rect x="19" y="18" width="8" height="8" rx="1" fill="#f07848" />
      <path d="M21 20.500h4v2h-4v2" stroke="#fff" fill="none" />
    </>,
  ],
  [
    "资源管理器",
    <>
      <path d="M2 5h9l2 3h15v18H2z" fill="#f3e08c" stroke="#c8a850" />
      <path d="M4 3h4v3H4zM12 4h4v3h-4zM20 5h4v3h-4z" fill="#d8e8c0" stroke="#b87848" strokeWidth=".7" />
      <path d="M2 11h26" stroke="#d8bc60" />
      <path d="M5 29v-8q0-3 3-3h14q3 0 3 3v8h-4v-6H9v6z" fill="#8cd0f0" stroke="#4a98c8" />
    </>,
  ],
  [
    "控制面板",
    <>
      <rect x="1" y="5" width="28" height="20" rx="2" fill="#3c98d8" stroke="#bfe4fa" />
      <circle cx="10" cy="13" r="5" fill="#78c0f0" stroke="#fff" />
      <path d="M10 13V8a5 5 0 0 1 5 5z" fill="#f8c848" />
      <path d="M18 10h8v3h-8zM18 16h8v3h-8z" fill="#bfe8ff" />
      <circle cx="15" cy="25" r="4" fill="#e0e4e8" />
    </>,
  ],
  [
    "计算器",
    <>
      <rect x="6" y="1" width="18" height="28" rx="1" fill="#c4dcf2" stroke="#6f98c4" />
      <rect x="8" y="4" width="14" height="6" fill="#6fb0e4" />
      <path d="M8 14h14M8 18h14M8 22h14M8 26h14" stroke="#4a80bc" strokeWidth="2.500" strokeDasharray="3 .7" />
    </>,
  ],
  [
    "剪映",
    <>
      <rect width="30" height="30" rx="6" fill="#000" />
      <path d="M23 9.500V9q0-2-2-2H10Q7 7 7 10l16 8v1q0 4-3 4H10q-3 0-3-4v-1l16-8" fill="none" stroke="#fff" strokeWidth="2.500" />
    </>,
  ],
  [
    "命令提示符",
    <>
      <rect x="1" y="4" width="28" height="22" fill="#080808" stroke="#999" />
      <text x="4" y="15" fontSize="9" fill="#fff" fontFamily="Liberation Mono">
        C:\_
      </text>
    </>,
  ],
  [
    "配置",
    <>
      <rect x="2" y="1" width="22" height="17" fill="#b4cce4" stroke="#7090b0" />
      <path d="M5 6h15M5 10h15M5 14h15" stroke="#fff" />
      <rect x="11" y="13" width="18" height="15" fill="#403c20" stroke="#c8b848" />
      <path d="M15 18h10M15 22h8" stroke="#d8c848" strokeWidth="2" />
      <circle cx="8" cy="23" r="6" fill="#d8d8d4" stroke="#777" />
      <circle cx="8" cy="23" r="2" fill="#777" />
    </>,
  ],
  [
    "钉钉",
    <>
      <circle cx="15" cy="15" r="14.500" fill="#3296fa" />
      <path d="M8 6q8 2 14 7-1 3-3 5l2 1-8 8 2-6h-2l1-2q-3 0-4-3l3 0q-4-2-4-5l3 1q-4-3-4-6z" fill="#fff" />
    </>,
  ],
];

const TaskBar = () => (
  <footer className="flex h-[37px] shrink-0 items-center bg-gradient-to-r from-[#463a26] via-[#8e7464] to-[#6a5450] text-white">
    <button aria-label="开始" className="ml-[7px]">
      <svg width="36" height="36" viewBox="0 0 36 36">
        <defs>
          <radialGradient id="orb" cx=".5" cy=".8">
            <stop offset="0" stopColor="#4cc8e8" />
            <stop offset="1" stopColor="#174a78" />
          </radialGradient>
        </defs>
        <circle cx="18" cy="18" r="16.500" fill="url(#orb)" stroke="#94b8cc" />
        <path d="M5 13a14 14 0 0 1 26 0q-13 4-26 0z" fill="#fff" opacity=".35" />
        <path d="M10 11q4-2 7 0l-1 7q-4-2-7 0z" fill="#f26a2c" />
        <path d="M18.500 11.500q4 2 8-.5l-1.500 7q-4 2-7.500 0z" fill="#8cc83c" />
        <path d="M8.800 19.500q4-2 7 0l-1 7q-4-2-7 0z" fill="#4aa8ec" />
        <path d="M17.300 20q4 2 7.700 0l-1.500 7q-4 2-7.200 0z" fill="#fcc828" />
      </svg>
    </button>
    <span className="ml-[10px]">
      <Grip />
    </span>
    <button aria-label="Edge" className="ml-[20px]">
      <svg width="31" height="31" viewBox="0 0 32 32">
        <circle cx="16" cy="16" r="15" fill="#1276c8" />
        <path d="M2 13C5-2 30-2 31 14c0 6-7 8-11 6 3-7-4-11-9-10-4 0-7 2-9 3z" fill="#3cc8b0" />
        <path d="M19 2c8 1 12 7 12 12 0 6-7 8-11 6 3-4 2-9-2-11z" fill="#68d868" opacity=".7" />
        <path d="M12 15c-2 9 6 15 16 11-8 9-22 4-20-6 1-3 2-4 4-5z" fill="#0c4f9c" />
      </svg>
    </button>
    <button aria-label="微信" className="ml-[26px]">
      <svg width="32" height="28" viewBox="0 0 32 28">
        <ellipse cx="12" cy="10" rx="11" ry="9.500" fill="#36c85c" />
        <path d="M5 17l-1 5 6-3z" fill="#36c85c" />
        <circle cx="8" cy="8" r="1.500" fill="#143" />
        <circle cx="16" cy="8" r="1.500" fill="#143" />
        <ellipse cx="22" cy="18" rx="9" ry="7.500" fill="#eee" />
        <path d="M27 23l1 4-5-2z" fill="#eee" />
        <circle cx="19" cy="16" r="1" fill="#555" />
        <circle cx="25" cy="16" r="1" fill="#555" />
      </svg>
    </button>
    <div className="ml-4 flex gap-1">
      {apps.map(([name, art]) => (
        <button
          key={name}
          aria-label={name}
          className="flex h-9 w-[54px] items-center justify-center rounded-sm border border-white/40 bg-gradient-to-b from-white/30 to-white/10 outline outline-black/30"
        >
          <svg width="30" height="30" viewBox="0 0 30 30">
            {art}
          </svg>
        </button>
      ))}
    </div>

    <div className="ml-auto flex items-center">
      <Grip />
      <svg width="15" height="15" viewBox="0 0 15 15" className="ml-[9px]">
        <rect width="15" height="15" rx="4" fill="#ec5a24" />
        <path d="M11 4.500Q4 2.500 4 6t7 3-7 2.500" fill="none" stroke="#fff" strokeWidth="2" />
      </svg>
      <svg width="7" height="5" viewBox="0 0 7 5" className="ml-4">
        <path d="M0 5h7L3.500 0z" fill="#fff" />
      </svg>
      <svg width="14" height="14" viewBox="0 0 14 14" className="ml-3">
        <g fill="#f4a8b4" stroke="#d85868">
          <circle cx="7" cy="3" r="2.500" />
          <circle cx="3" cy="6" r="2.500" />
          <circle cx="11" cy="6" r="2.500" />
          <circle cx="4.500" cy="11" r="2.500" />
          <circle cx="9.500" cy="11" r="2.500" />
        </g>
      </svg>
      <svg width="15" height="15" viewBox="0 0 15 15" className="ml-2">
        <circle cx="7.500" cy="7.500" r="7" fill="#3c8cf0" />
        <path d="M3 4l8 3-3 5-1-3z" fill="#fff" />
        <circle cx="12" cy="3" r="2.500" fill="#e84838" />
      </svg>
      <svg width="15" height="15" viewBox="0 0 15 15" className="ml-2">
        <path d="M2 1v14M2 2h9v6H2" fill="#eee" stroke="#fff" />
        <rect x="6" y="7" width="8" height="8" fill="#d83830" />
        <path d="M8 9l4 4M12 9l-4 4" stroke="#fff" />
      </svg>
      <svg width="15" height="15" viewBox="0 0 15 15" fill="none" stroke="#fff" className="ml-2">
        <path d="M6 14H2V3h5M4 1.500h2M8 3v4q3 3 5 0V3zM9 1v2M12 1v2M10.500 8v6H8" strokeWidth="1.300" />
      </svg>
      <svg width="15" height="13" viewBox="0 0 15 13" className="ml-2">
        <path d="M1.500 13v-3M4.500 13V8M7.500 13V6M10.500 13V3M13.500 13V0" stroke="#fff" strokeWidth="2" />
      </svg>
      <Volume2 size={15} fill="#fff" className="ml-[9px]" strokeWidth={1.5} />
      <div className="ml-3 flex w-[60px] flex-col items-center whitespace-nowrap text-[12px] leading-4">
        <span>10:32</span>
        <span>2021/9/29</span>
      </div>
      <button aria-label="显示桌面" className="ml-[6px] h-[37px] w-[13px] border-l border-white/30 bg-gradient-to-r from-black/30 to-white/10" />
    </div>
  </footer>
);

const App: React.FC = () => {
  return (
    <div className={`relative flex h-screen flex-col overflow-hidden bg-white ${UI_FONT}`}>
      <TitleBar />
      <MenuBar />
      <Ribbon />

      <main className="flex min-h-0 flex-1 overflow-hidden bg-[#f5f6f9]">
        <SlideList />
        <div className="flex min-w-0 flex-1 flex-col">
          <div className="flex min-h-0 flex-1 overflow-hidden pl-[27px]">
            <Slide />
            <Pasteboard />
          </div>
          {/* speaker notes */}
          <div className="h-[30px] shrink-0 overflow-hidden border-t border-[#ebebef] bg-[#f6f7fa] pl-[10px] pt-1 text-[13px] leading-4 text-[#5c6270]">
            <p>
              <span className="inline-block w-4">•</span>IPv4地址由如下两部分组成：
            </p>
            <p className="pl-9">
              <span className="inline-block w-4">–</span>网络部分 (网络号)：用来标识一个网络
            </p>
          </div>
        </div>
        <ScrollRail />
        <SideRail />
      </main>

      <StatusBar />
      <TaskBar />

      {/* subtitle */}
      <div className="absolute bottom-[67px] left-1/2 flex h-[61px] -translate-x-1/2 items-center whitespace-nowrap rounded-lg bg-[#6a6a6a]/90 px-3 font-['Noto_Sans_CJK_SC',sans-serif] text-[37px] font-medium text-white">
        接下来我们看一下IP地址的构成
      </div>
    </div>
  );
};

export default App;
